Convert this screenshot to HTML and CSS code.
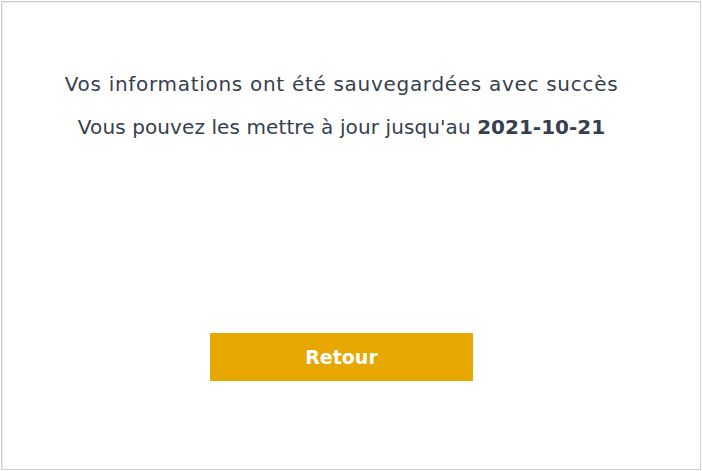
FILE: index.html
```html
<!DOCTYPE html>
<html lang="fr">
<head>
<meta charset="utf-8">
<link rel="stylesheet" href="styles.css">
</head>
<body>
<div class="frame">
  <div class="messages">
    <p class="msg">Vos informations ont été sauvegardées avec succès</p>
    <p class="msg msg-tight">Vous pouvez les mettre à jour jusqu'au <span class="date">2021-10-21</span></p>
  </div>
  <div class="actions">
    <button class="btn">Retour</button>
  </div>
</div>
</body>
</html>
```
FILE: styles.css
```css
html, body {
  margin: 0;
  padding: 0;
  background: #ffffff;
}
.frame {
  box-sizing: border-box;
  margin: 1px;
  width: 700px;
  height: 469px;
  border: 1px solid #d0d0d0;
  box-shadow: inset 1px 1px 0 #ececec;
  display: flex;
  flex-direction: column;
  align-items: center;
  padding: 71px 19px 0 0;
  font-family: "DejaVu Sans", "Open Sans", sans-serif;
  color: #36404d;
}
.messages {
  display: flex;
  flex-direction: column;
  align-items: center;
  gap: 20px;
}
.msg {
  margin: 0;
  font-size: 20px;
  line-height: 23px;
  letter-spacing: 0.7px;
}
.msg-tight {
  letter-spacing: 0.1px;
}
.date {
  font-weight: 700;
  letter-spacing: 0;
}
.actions {
  margin-top: 194px;
}
.btn {
  display: block;
  width: 263px;
  height: 48px;
  padding: 0;
  border: none;
  background: #e5a700;
  color: #ffffff;
  font-family: "DejaVu Sans", "Open Sans", sans-serif;
  font-size: 19px;
  font-weight: 700;
  cursor: pointer;
}
```
